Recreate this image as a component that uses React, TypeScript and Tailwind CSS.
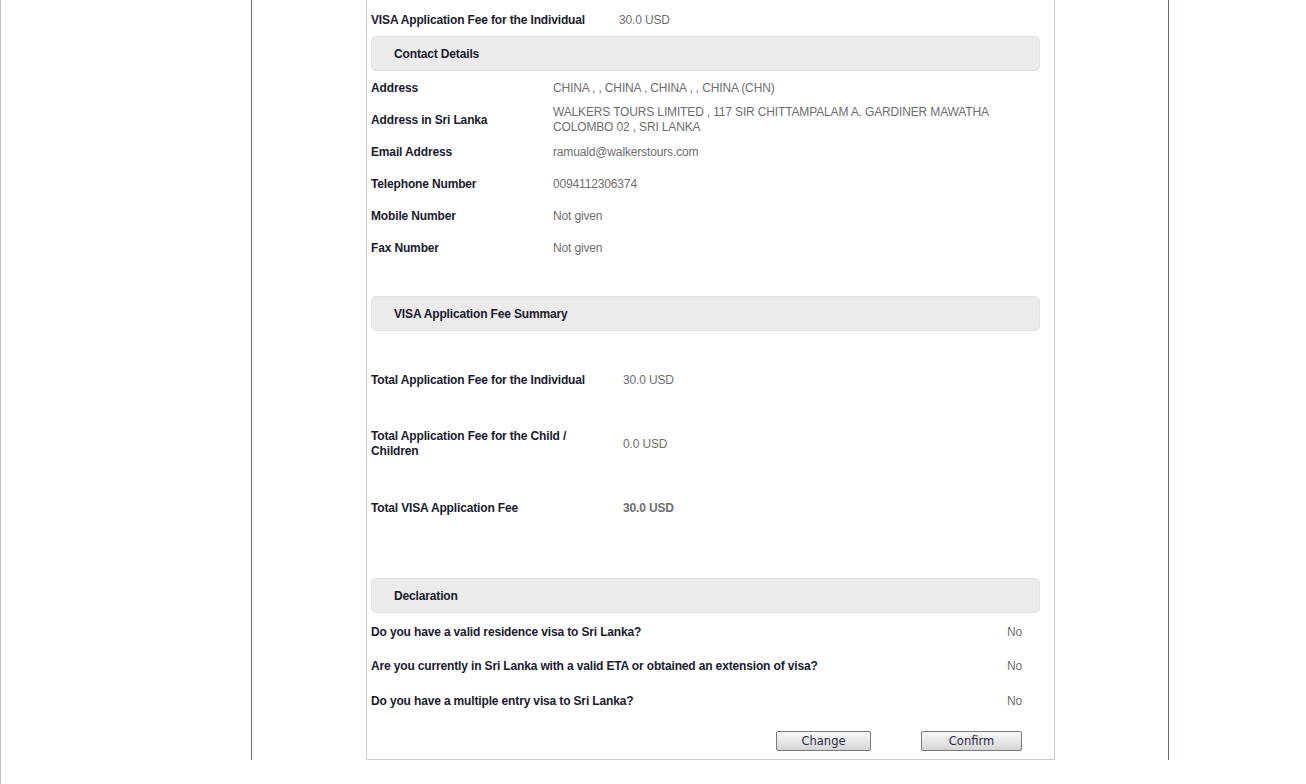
import React from "react";

const F = { fontFamily: '"Liberation Sans", Arial, sans-serif' };
const BF = { fontFamily: 'Tahoma, "DejaVu Sans", sans-serif' };

function Header({ title }: { title: string }) {
  return (
    <div className="h-[35px] rounded-[5px] bg-[#ebebeb] border border-[#e2e2e2] flex items-center pl-[22px] text-[12px] font-bold text-[#1a1a2e]">
      {title}
    </div>
  );
}

function Row({ label, value, w, h, bold }: { label: React.ReactNode; value: React.ReactNode; w: string; h: string; bold?: boolean }) {
  return (
    <div className={`flex items-center pt-[2px] ${h}`}>
      <div className={`${w} shrink-0 text-[12px] leading-[15px] font-bold text-[#1a1a2e]`}>{label}</div>
      <div className={`text-[12px] leading-[15px] text-[#6e6e6e] ${bold ? "font-bold" : ""}`}>{value}</div>
    </div>
  );
}

function Btn({ children, w }: { children: React.ReactNode; w: string }) {
  return (
    <button
      style={BF}
      className={`${w} h-[20px] rounded-[2px] border border-[#7a7a7a] bg-gradient-to-b from-[#f6f6f6] via-[#e8e8e8] to-[#d4d4d4] text-[11.5px] leading-[18px] text-[#2a2a4a] tracking-normal flex items-center justify-center`}
    >
      {children}
    </button>
  );
}

export default function App() {
  const contact: [string, React.ReactNode][] = [
    ["Address", "CHINA , , CHINA , CHINA , , CHINA (CHN)"],
    [
      "Address in Sri Lanka",
      <span>
        WALKERS TOURS LIMITED , 117 SIR CHITTAMPALAM A. GARDINER MAWATHA
        <br />
        COLOMBO 02 , SRI LANKA
      </span>,
    ],
    ["Email Address", "ramuald@walkerstours.com"],
    ["Telephone Number", "0094112306374"],
    ["Mobile Number", "Not given"],
    ["Fax Number", "Not given"],
  ];
  const decl = [
    ["Do you have a valid residence visa to Sri Lanka?", "h-[36px]"],
    ["Are you currently in Sri Lanka with a valid ETA or obtained an extension of visa?", "h-[33px]"],
    ["Do you have a multiple entry visa to Sri Lanka?", "h-[36px]"],
  ];
  return (
    <div style={F} className="w-[1306px] h-[784px] bg-white border-l border-[#c4c4c4] overflow-hidden tracking-[-0.15px]">
      <div className="ml-[250px] w-[918px] h-[760px] border-x border-[#5d6b82] pl-[114px]">
        <div className="w-[689px] h-[760px] border-x border-b border-[#cfcfcf] pl-[4px] pr-[14px] flex flex-col">
          <div className="h-[36px] pt-[5px] flex items-center">
            <div className="w-[248px] shrink-0 text-[12px] leading-[15px] font-bold text-[#1a1a2e]">
              VISA Application Fee for the Individual
            </div>
            <div className="text-[12px] leading-[15px] text-[#6e6e6e]">30.0 USD</div>
          </div>
          <Header title="Contact Details" />
          {contact.map(([l, v]) => (
            <Row key={l} label={l} value={v} w="w-[182px]" h="h-[32px]" />
          ))}
          <div className="h-[33px]" />
          <Header title="VISA Application Fee Summary" />
          <div className="h-[16px]" />
          <Row label={<div className="w-[230px]">Total Application Fee for the Individual</div>} value="30.0 USD" w="w-[252px]" h="h-[64px]" />
          <Row label={<div className="w-[230px]">Total Application Fee for the Child / Children</div>} value="0.0 USD" w="w-[252px]" h="h-[64px]" />
          <Row label="Total VISA Application Fee" value="30.0 USD" w="w-[252px]" h="h-[64px]" bold />
          <div className="h-[39px]" />
          <Header title="Declaration" />
          {decl.map(([q, h]) => (
            <div key={q} className={`flex items-center pt-[2px] ${h}`}>
              <div className="flex-1 text-[12px] leading-[15px] font-bold text-[#1a1a2e]">{q}</div>
              <div className="w-[33px] text-[12px] leading-[15px] text-[#6e6e6e]">No</div>
            </div>
          ))}
          <div className="h-[13px]" />
          <div className="flex justify-end gap-[50px] pr-[18px]">
            <Btn w="w-[95px]">Change</Btn>
            <Btn w="w-[101px]">Confirm</Btn>
          </div>
        </div>
      </div>
    </div>
  );
}
